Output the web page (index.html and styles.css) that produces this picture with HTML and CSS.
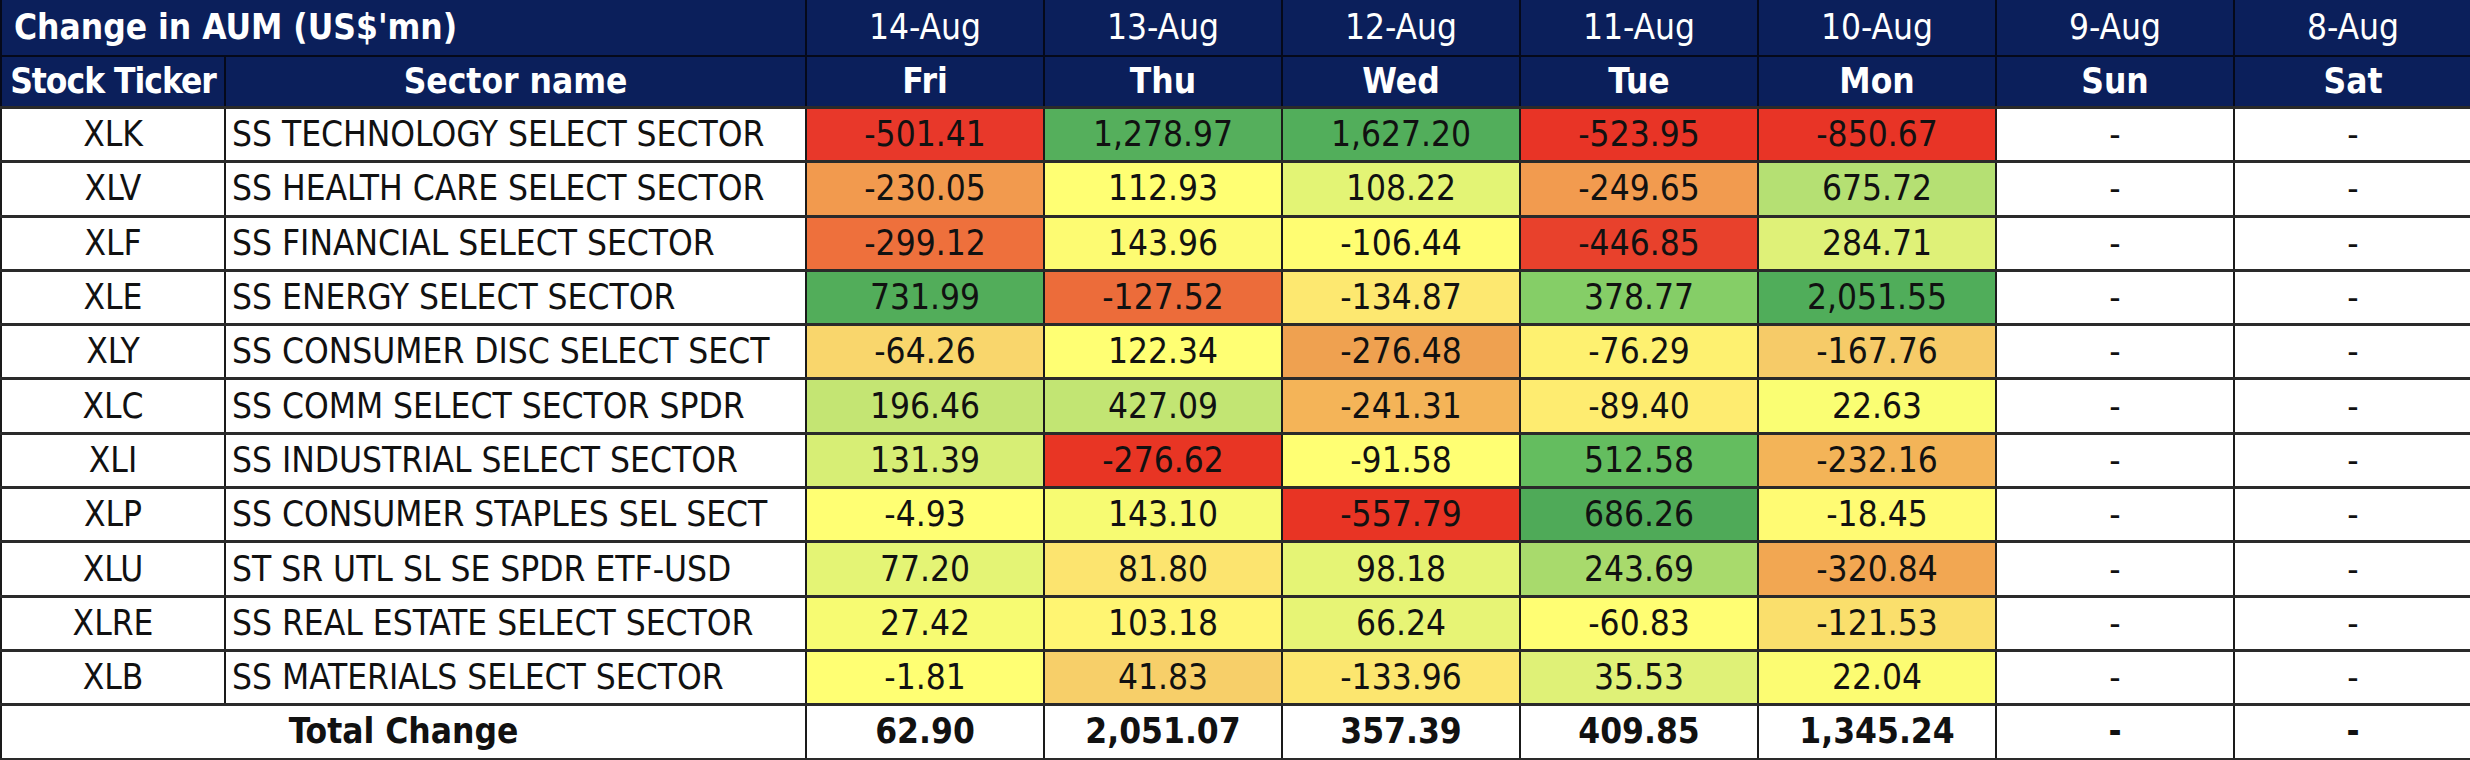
FILE: index.html
```html
<!DOCTYPE html>
<html>
<head>
<meta charset="utf-8">
<link rel="stylesheet" href="styles.css">
</head>
<body>
<table class="aum">
<colgroup>
<col class="c-tick"><col class="c-sect"><col class="c-day"><col class="c-day"><col class="c-day"><col class="c-day"><col class="c-day"><col class="c-day"><col class="c-day">
</colgroup>
<thead>
<tr class="h1">
<th colspan="2" class="title">Change in AUM (US$'mn)</th>
<th>14-Aug</th><th>13-Aug</th><th>12-Aug</th><th>11-Aug</th><th>10-Aug</th><th>9-Aug</th><th>8-Aug</th>
</tr>
<tr class="h2">
<th class="tick-h">Stock Ticker</th><th>Sector name</th>
<th>Fri</th><th>Thu</th><th>Wed</th><th>Tue</th><th>Mon</th><th>Sun</th><th>Sat</th>
</tr>
</thead>
<tbody>
<tr><td class="tk">XLK</td><td class="sn">SS TECHNOLOGY SELECT SECTOR</td>
<td style="background:#e8382a">-501.41</td><td style="background:#55af5c">1,278.97</td><td style="background:#52ae5b">1,627.20</td><td style="background:#e83426">-523.95</td><td style="background:#e83426">-850.67</td><td>-</td><td>-</td></tr>
<tr><td class="tk">XLV</td><td class="sn">SS HEALTH CARE SELECT SECTOR</td>
<td style="background:#f29a4e">-230.05</td><td style="background:#ffff73">112.93</td><td style="background:#e3f475">108.22</td><td style="background:#f29b4f">-249.65</td><td style="background:#b5e073">675.72</td><td>-</td><td>-</td></tr>
<tr><td class="tk">XLF</td><td class="sn">SS FINANCIAL SELECT SECTOR</td>
<td style="background:#ee703c">-299.12</td><td style="background:#fdfb72">143.96</td><td style="background:#fffd72">-106.44</td><td style="background:#e8412c">-446.85</td><td style="background:#dff178">284.71</td><td>-</td><td>-</td></tr>
<tr><td class="tk">XLE</td><td class="sn">SS ENERGY SELECT SECTOR</td>
<td style="background:#52ad5a">731.99</td><td style="background:#ec6c3a">-127.52</td><td style="background:#fde870">-134.87</td><td style="background:#85ce67">378.77</td><td style="background:#50ad5a">2,051.55</td><td>-</td><td>-</td></tr>
<tr><td class="tk">XLY</td><td class="sn">SS CONSUMER DISC SELECT SECT</td>
<td style="background:#f9d66c">-64.26</td><td style="background:#ffff73">122.34</td><td style="background:#efa150">-276.48</td><td style="background:#fef170">-76.29</td><td style="background:#f6cb68">-167.76</td><td>-</td><td>-</td></tr>
<tr><td class="tk">XLC</td><td class="sn">SS COMM SELECT SECTOR SPDR</td>
<td style="background:#c4e573">196.46</td><td style="background:#c2e573">427.09</td><td style="background:#f4b458">-241.31</td><td style="background:#feec70">-89.40</td><td style="background:#fafe73">22.63</td><td>-</td><td>-</td></tr>
<tr><td class="tk">XLI</td><td class="sn">SS INDUSTRIAL SELECT SECTOR</td>
<td style="background:#d7ee75">131.39</td><td style="background:#e83524">-276.62</td><td style="background:#ffff73">-91.58</td><td style="background:#64bd5f">512.58</td><td style="background:#f3b458">-232.16</td><td>-</td><td>-</td></tr>
<tr><td class="tk">XLP</td><td class="sn">SS CONSUMER STAPLES SEL SECT</td>
<td style="background:#ffff73">-4.93</td><td style="background:#f7fb72">143.10</td><td style="background:#e83424">-557.79</td><td style="background:#4faa58">686.26</td><td style="background:#fffb73">-18.45</td><td>-</td><td>-</td></tr>
<tr><td class="tk">XLU</td><td class="sn">ST SR UTL SL SE SPDR ETF-USD</td>
<td style="background:#e4f475">77.20</td><td style="background:#fce46f">81.80</td><td style="background:#e5f475">98.18</td><td style="background:#a8da6c">243.69</td><td style="background:#f2a752">-320.84</td><td>-</td><td>-</td></tr>
<tr><td class="tk">XLRE</td><td class="sn">SS REAL ESTATE SELECT SECTOR</td>
<td style="background:#f7fb72">27.42</td><td style="background:#fff572">103.18</td><td style="background:#e7f475">66.24</td><td style="background:#fffe73">-60.83</td><td style="background:#fadf6c">-121.53</td><td>-</td><td>-</td></tr>
<tr><td class="tk">XLB</td><td class="sn">SS MATERIALS SELECT SECTOR</td>
<td style="background:#ffff73">-1.81</td><td style="background:#f7cf69">41.83</td><td style="background:#fce66f">-133.96</td><td style="background:#dff177">35.53</td><td style="background:#fcfc72">22.04</td><td>-</td><td>-</td></tr>
<tr class="total"><td colspan="2">Total Change</td>
<td>62.90</td><td>2,051.07</td><td>357.39</td><td>409.85</td><td>1,345.24</td><td>-</td><td>-</td></tr>
</tbody>
</table>
</body>
</html>
```
FILE: styles.css
```css
html, body {
  margin: 0;
  padding: 0;
  background: #ffffff;
}
body {
  font-family: "DejaVu Sans Condensed", "DejaVu Sans", sans-serif;
  font-stretch: condensed;
  color: #111111;
}
.aum {
  border-collapse: collapse;
  table-layout: fixed;
  width: 2468px;
  font-size: 35px;
  line-height: 1;
}
.c-tick { width: 224px; }
.c-sect { width: 581px; }
.c-day { width: 238px; }
.aum th, .aum td {
  padding: 0 8px;
  text-align: center;
  vertical-align: middle;
  white-space: nowrap;
  overflow: hidden;
}
.aum th {
  background: #0b1f5b;
  color: #ffffff;
  border: 2px solid #05091a;
}
.h1 th {
  font-weight: normal;
  height: 55px;
  border-top: 0;
}
.h1 th.title {
  font-weight: bold;
  text-align: left;
  padding-left: 12px;
}
.h2 th {
  font-weight: bold;
  height: 49px;
}
.h2 th.tick-h {
  padding: 0;
  letter-spacing: -1px;
}
.aum td {
  height: 51.3px;
  border-left: 2px solid #1a1a1a;
  border-right: 2px solid #1a1a1a;
  border-top: 3px solid #2a2a2a;
  border-bottom: 3px solid #2a2a2a;
  background: #ffffff;
}
.aum td.sn {
  text-align: left;
  padding-left: 6px;
}
.total td {
  font-weight: bold;
}
```
